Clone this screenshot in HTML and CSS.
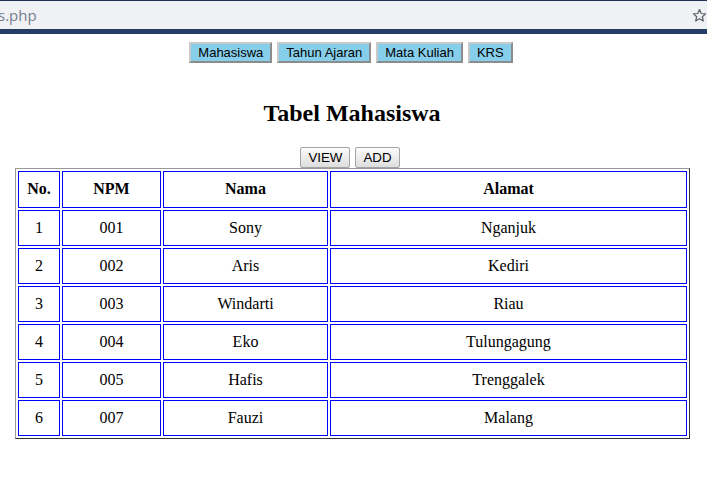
FILE: index.html
```html
<!DOCTYPE html>
<html>
<head>
<meta charset="utf-8">
<title>Tabel Mahasiswa</title>
<link rel="stylesheet" href="styles.css">
</head>
<body>
<div class="chrome">
  <span class="url">s.php</span>
  <svg class="star" viewBox="0 0 24 24" width="15" height="15" aria-hidden="true"><path d="M12 2.5l2.8 6.3 6.9.6-5.2 4.6 1.6 6.8L12 17.2l-6.1 3.6 1.6-6.8-5.2-4.6 6.9-.6z" fill="none" stroke="#5f6368" stroke-width="2" stroke-linejoin="round"/></svg>
</div>
<div class="page">
  <nav class="menu">
    <a class="mbtn">Mahasiswa</a>
    <a class="mbtn">Tahun Ajaran</a>
    <a class="mbtn">Mata Kuliah</a>
    <a class="mbtn">KRS</a>
  </nav>
  <h2 class="title">Tabel Mahasiswa</h2>
  <div class="actions">
    <button class="btn">VIEW</button>
    <button class="btn">ADD</button>
  </div>
  <table class="grid">
    <thead>
      <tr><th class="c1">No.</th><th class="c2">NPM</th><th class="c3">Nama</th><th class="c4">Alamat</th></tr>
    </thead>
    <tbody>
      <tr><td>1</td><td>001</td><td>Sony</td><td>Nganjuk</td></tr>
      <tr><td>2</td><td>002</td><td>Aris</td><td>Kediri</td></tr>
      <tr><td>3</td><td>003</td><td>Windarti</td><td>Riau</td></tr>
      <tr><td>4</td><td>004</td><td>Eko</td><td>Tulungagung</td></tr>
      <tr><td>5</td><td>005</td><td>Hafis</td><td>Trenggalek</td></tr>
      <tr><td>6</td><td>007</td><td>Fauzi</td><td>Malang</td></tr>
    </tbody>
  </table>
</div>
</body>
</html>
```
FILE: styles.css
```css
html, body {
  margin: 0;
  padding: 0;
  background: #ffffff;
}
body {
  font-family: "Liberation Serif", "Times New Roman", serif;
  color: #000;
}
.chrome {
  box-sizing: border-box;
  height: 34px;
  border-top: 1px solid #1e3352;
  border-bottom: 5px solid #243f66;
  background: #eff1f4;
  display: flex;
  align-items: center;
  justify-content: space-between;
}
.url {
  font-family: "Open Sans", "DejaVu Sans", sans-serif;
  font-size: 15px;
  color: #76808e;
  margin-left: -2px;
  line-height: 20px;
}
.star {
  display: block;
  margin-right: 0;
}
.page {
  width: 688px;
  margin-left: 8px;
  padding-top: 8px;
}
.menu {
  display: flex;
  justify-content: center;
  gap: 5px;
  padding-right: 2px;
}
.mbtn {
  font-family: "Liberation Sans", Arial, sans-serif;
  font-size: 13px;
  line-height: 15px;
  padding: 1px 7px;
  background: #87ceeb;
  color: #000;
  border: 2px solid;
  border-color: #c9c9c9 #8c8c8c #8c8c8c #c9c9c9;
}
.title {
  font-size: 24px;
  font-weight: bold;
  text-align: center;
  margin: 37px 0 20px;
}
.actions {
  display: flex;
  justify-content: center;
  gap: 5px;
  padding-right: 4px;
  margin-top: 1px;
}
.btn {
  box-sizing: border-box;
  height: 21px;
  font-family: "Liberation Sans", Arial, sans-serif;
  font-size: 13.33px;
  padding: 1px 7px;
  color: #000;
  border: 1px solid #a3a3a3;
  border-radius: 2px;
  background: linear-gradient(#fbfbfb, #dedede);
}
.grid {
  table-layout: fixed;
  width: 675px;
  margin-left: 7px;
  border-collapse: separate;
  border-spacing: 2px;
  border: 1px solid;
  border-color: #9a9a9a #333333 #333333 #9a9a9a;
}
.grid th,
.grid td {
  box-sizing: border-box;
  border: 1px solid #0000ff;
  text-align: center;
  font-size: 16px;
  line-height: 18px;
  padding: 8px 2px;
}
.grid th {
  padding-bottom: 9px;
  font-weight: bold;
}
.c1 { width: 42px; }
.c2 { width: 99px; }
.c3 { width: 165px; }
.c4 { width: 357px; }
```
